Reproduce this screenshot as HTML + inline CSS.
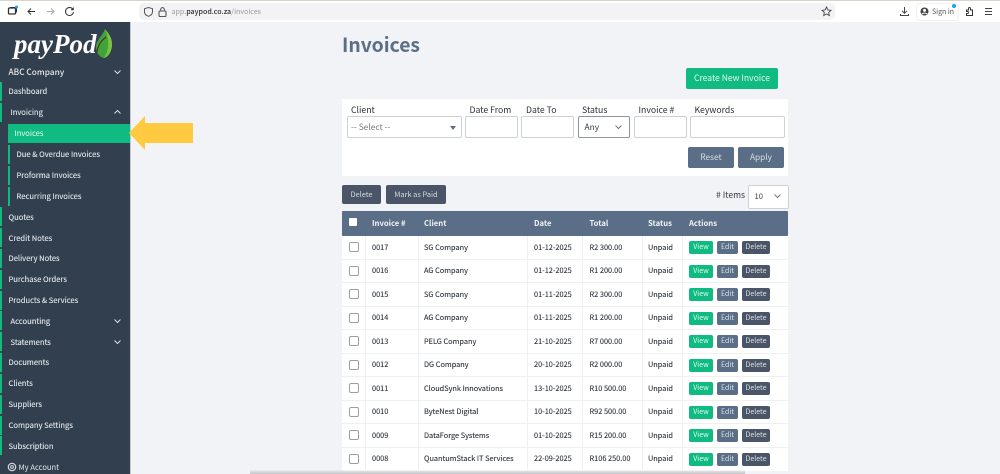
<!DOCTYPE html>
<html><head><meta charset="utf-8"><title>Invoices</title>
<style>
html,body{margin:0;padding:0;width:1000px;height:474px;overflow:hidden;background:#f2f3f6;font-family:"Noto Sans CJK JP","Liberation Sans",sans-serif;font-size:7.6px;color:#333b46}
div,span,svg{position:absolute;box-sizing:border-box}
.t{white-space:nowrap;line-height:12px}
.s{color:#e2e6ea;left:8.5px;-webkit-text-stroke:.12px #e2e6ea}
.g{left:0;width:2px;background:#10bb82}
.sg{left:8px;width:2px;background:#10bb82}
.l{color:#2b2f36;font-size:8.7px;top:104px}
.i{background:#fff;border:1px solid #ccd1d6;border-radius:2px;top:116px;height:22px}
.rw{left:342px;width:446px;height:23.5px;background:#fff;border-bottom:1px solid #eef0f2}
.c{width:10px;height:10px;left:7px;top:6px;border:1px solid #9a9fa5;border-radius:2px;background:#fff}
.rw .t{top:5.5px;color:#2f3640;font-size:7.35px;-webkit-text-stroke:.12px #2f3640}
.b{top:5px;height:13px;border-radius:2px;color:#dde2e7;font-size:7px;line-height:13px;text-align:center}
.v{left:347px;width:24px;background:#10bb82;color:#e2f8ef}
.e{left:375px;width:21px;background:#5a6f87}
.d{left:400px;width:28px;background:#4a5568}
.h{top:218px;color:#f2f4f6;font-weight:700;font-size:7.7px}
.vl{top:236px;width:1px;height:234px;background:#eef0f2}
</style></head><body>

<div style="left:0;top:0;width:1000px;height:22px;background:#fff"></div>
<div style="left:0;top:0;width:1000px;height:1px;background:#d8d4cc"></div>
<svg style="left:7px;top:4px" width="12" height="12" viewBox="0 0 12 12"><rect x="1.5" y="4" width="7" height="6" rx="1" fill="none" stroke="#333" stroke-width="1.3"/><path d="M3 3.5h6.5v5" fill="none" stroke="#333" stroke-width="1"/><circle cx="9.5" cy="3" r="1.5" fill="#1aa3ef"/></svg>
<svg style="left:26px;top:6px" width="11" height="11" viewBox="0 0 11 11"><path d="M9 5.5H2M5 2.5l-3 3 3 3" fill="none" stroke="#333" stroke-width="1"/></svg>
<svg style="left:45px;top:6px" width="11" height="11" viewBox="0 0 11 11"><path d="M2 5.5h7M6 2.5l3 3-3 3" fill="none" stroke="#aaa" stroke-width="1"/></svg>
<svg style="left:64px;top:6px" width="11" height="11" viewBox="0 0 11 11"><path d="M8.8 3.2A4 4 0 1 0 9.5 6M9.3 1.5v2.3H7" fill="none" stroke="#333" stroke-width="1"/></svg>
<div style="left:139px;top:3px;width:696px;height:17px;background:#f3f3f5;border-radius:5px"></div>
<svg style="left:143px;top:6px" width="11" height="12" viewBox="0 0 11 12"><path d="M5.5 1.5l4 1.2v3c0 2.4-1.8 3.8-4 4.6-2.2-.8-4-2.2-4-4.6v-3z" fill="none" stroke="#555" stroke-width="1"/></svg>
<svg style="left:157px;top:6px" width="11" height="12" viewBox="0 0 11 12"><rect x="2" y="5" width="7" height="5.5" rx="1" fill="none" stroke="#555" stroke-width="1.1"/><path d="M3.7 5V3.4a1.8 1.8 0 0 1 3.6 0V5" fill="none" stroke="#555" stroke-width="1"/></svg>
<div class="t" style="left:171.5px;top:5.5px;font-size:7.1px;color:#9a9a9f">app.<span style="position:static;color:#2b2b30;font-weight:500">paypod.co.za</span>/invoices</div>
<svg style="left:821px;top:6px" width="11" height="11" viewBox="0 0 11 11"><path d="M5.5 1l1.4 2.9 3.1.4-2.3 2.1.6 3.1-2.8-1.5-2.8 1.5.6-3.1L1 4.3l3.1-.4z" fill="none" stroke="#444" stroke-width=".9"/></svg>
<svg style="left:899px;top:6px" width="11" height="11" viewBox="0 0 11 11"><path d="M5.5 1v6M3 4.8l2.5 2.5L8 4.8M1.5 8v1.5h8V8" fill="none" stroke="#444" stroke-width="1"/></svg>
<div style="left:916px;top:3px;width:43px;height:18px;background:#fff;border:1px solid #f0f0f2;border-radius:4px"></div>
<svg style="left:920px;top:7px" width="9" height="9" viewBox="0 0 9 9"><circle cx="4.5" cy="4.5" r="4" fill="#444"/><circle cx="4.5" cy="3.4" r="1.5" fill="#fff"/><path d="M2 7.2c.6-1.4 4.4-1.4 5 0" stroke="#fff" fill="none"/></svg>
<div class="t" style="left:932px;top:6px;font-size:7px;color:#555">Sign in</div>
<div style="left:952px;top:4px;width:4px;height:4px;border-radius:50%;background:#1aa3ef"></div>
<svg style="left:964px;top:6px" width="11" height="11" viewBox="0 0 11 11"><path d="M2.5 4h2V2.5a1 1 0 0 1 2 0V4h2v5.5h-6V7.5h1a1 1 0 0 0 0-2h-1z" fill="none" stroke="#333" stroke-width="1"/></svg>
<svg style="left:983px;top:7px" width="11" height="9" viewBox="0 0 11 9"><path d="M2 1.5h7M2 4.5h7M2 7.5h7" stroke="#444" stroke-width="1"/></svg>

<div style="left:0;top:22px;width:130px;height:452px;background:#323f4e"></div>
<div style="left:130px;top:22px;width:1px;height:452px;background:#c4c9cf"></div>

<div class="t" style="left:14px;top:28px;font-family:'Liberation Serif',serif;font-style:italic;font-weight:700;font-size:27px;line-height:32px;color:#fff">payPod</div>
<svg style="left:94px;top:28px" width="20" height="33" viewBox="0 0 20 33"><path d="M11 1c4 5 7 9 7 15 0 8-4 13-8 14C5 29 2 24 2 19 2 12 8 9 11 1z" fill="#3fa23a"/><path d="M11 1c4 5 7 9 7 15 0 8-4 13-8 14 6-9 5-19 1-29z" fill="#7cc243"/><path d="M3 24C4 16 8 12 12 9" fill="none" stroke="#5a2d1a" stroke-width="1.1"/></svg>

<div class="t" style="left:8.5px;top:66px;color:#e6e9ec;font-size:8.3px;font-weight:500">ABC Company</div>
<svg style="left:113px;top:68px" width="9" height="8" viewBox="0 0 9 8"><path d="M1.5 2.5l3 3 3-3" fill="none" stroke="#d8dde3" stroke-width="1"/></svg>

<div class="g" style="top:82px;height:19px"></div><div class="t s" style="top:86px">Dashboard</div>
<div class="g" style="top:103px;height:19px"></div><div class="t s" style="top:107px;left:10.5px">Invoicing</div>
<svg style="left:113px;top:108px" width="9" height="8" viewBox="0 0 9 8"><path d="M1.5 5.5l3-3 3 3" fill="none" stroke="#d8dde3" stroke-width="1"/></svg>
<div style="left:8px;top:124px;width:122px;height:19px;background:#10bb82"></div><div class="t" style="left:14.5px;top:128px;color:#eefbf6">Invoices</div>
<div class="sg" style="top:145px;height:19px"></div><div class="t s" style="top:149px;left:16.5px">Due &amp; Overdue Invoices</div>
<div class="sg" style="top:166px;height:19px"></div><div class="t s" style="top:170px;left:16.5px">Proforma Invoices</div>
<div class="sg" style="top:187px;height:19px"></div><div class="t s" style="top:191px;left:16.5px">Recurring Invoices</div>
<div class="g" style="top:207px;height:19px"></div><div class="t s" style="top:212px">Quotes</div>
<div class="g" style="top:228px;height:19px"></div><div class="t s" style="top:233px">Credit Notes</div>
<div class="g" style="top:249px;height:19px"></div><div class="t s" style="top:253px">Delivery Notes</div>
<div class="g" style="top:270px;height:19px"></div><div class="t s" style="top:274px">Purchase Orders</div>
<div class="g" style="top:291px;height:19px"></div><div class="t s" style="top:295px">Products &amp; Services</div>
<div class="g" style="top:311px;height:19px"></div><div class="t s" style="top:316px;left:10.5px">Accounting</div>
<svg style="left:113px;top:317px" width="9" height="8" viewBox="0 0 9 8"><path d="M1.5 2.5l3 3 3-3" fill="none" stroke="#d8dde3" stroke-width="1"/></svg>
<div class="g" style="top:332px;height:19px"></div><div class="t s" style="top:337px;left:10.5px">Statements</div>
<svg style="left:113px;top:338px" width="9" height="8" viewBox="0 0 9 8"><path d="M1.5 2.5l3 3 3-3" fill="none" stroke="#d8dde3" stroke-width="1"/></svg>
<div class="g" style="top:353px;height:19px"></div><div class="t s" style="top:357px">Documents</div>
<div class="g" style="top:374px;height:19px"></div><div class="t s" style="top:378px">Clients</div>
<div class="g" style="top:395px;height:19px"></div><div class="t s" style="top:399px">Suppliers</div>
<div class="g" style="top:416px;height:19px"></div><div class="t s" style="top:420px">Company Settings</div>
<div class="g" style="top:436px;height:19px"></div><div class="t s" style="top:441px">Subscription</div>
<svg style="left:7px;top:462px" width="10" height="10" viewBox="0 0 10 10"><circle cx="5" cy="5" r="3.7" fill="none" stroke="#d8dde3" stroke-width="1.2"/><circle cx="5" cy="5" r="1.4" fill="none" stroke="#d8dde3"/></svg>
<div class="t" style="left:18.5px;top:461.5px;color:#e2e6ea">My Account</div>

<svg style="left:128px;top:114px" width="66" height="36" viewBox="0 0 66 36"><path d="M1 19L17 2v7h48v20H17v7z" fill="#ffc940"/></svg>

<div class="t" style="left:342px;top:32px;font-size:19.3px;line-height:24px;font-weight:700;color:#5a6f87">Invoices</div>
<div class="t" style="left:686px;top:68px;width:92px;height:21px;background:#10bb82;border-radius:2px;color:#e2f8ef;font-size:8.55px;line-height:21px;text-align:center">Create New Invoice</div>

<div style="left:342px;top:99px;width:446px;height:77px;background:#fff"></div>
<div class="t l" style="left:351px">Client</div>
<div class="t l" style="left:469.5px">Date From</div>
<div class="t l" style="left:526px">Date To</div>
<div class="t l" style="left:582px">Status</div>
<div class="t l" style="left:638.5px">Invoice #</div>
<div class="t l" style="left:694.5px">Keywords</div>
<div class="i" style="left:346.5px;width:115px"></div>
<div class="t" style="left:351px;top:121px;color:#777;font-size:8.4px">-- Select --</div>
<svg style="left:449px;top:125px" width="8" height="6" viewBox="0 0 8 6"><path d="M1 1h6L4 5z" fill="#5a6f87"/></svg>
<div class="i" style="left:465px;width:53px"></div>
<div class="i" style="left:521px;width:53px"></div>
<div class="i" style="left:578px;width:52px;border-color:#8f959c"></div>
<div class="t" style="left:584.5px;top:121px;font-size:8.4px;color:#333b46">Any</div>
<svg style="left:614px;top:123px" width="9" height="8" viewBox="0 0 9 8"><path d="M1.5 2.5l3 3 3-3" fill="none" stroke="#777" stroke-width="1"/></svg>
<div class="i" style="left:634px;width:53px"></div>
<div class="i" style="left:690px;width:95px"></div>
<div class="t" style="left:688px;top:146.5px;width:46px;height:21px;background:#5a6f87;border-radius:2px;color:#d8dee4;font-size:8.3px;line-height:21px;text-align:center">Reset</div>
<div class="t" style="left:738px;top:146.5px;width:46px;height:21px;background:#5a6f87;border-radius:2px;color:#d8dee4;font-size:8.3px;line-height:21px;text-align:center">Apply</div>

<div class="t" style="left:342px;top:185px;width:39px;height:19px;background:#4a5568;border-radius:2px;color:#d5dae0;font-size:7.4px;line-height:19px;text-align:center">Delete</div>
<div class="t" style="left:386px;top:185px;width:60px;height:19px;background:#4a5568;border-radius:2px;color:#d5dae0;font-size:7.4px;line-height:19px;text-align:center">Mark as Paid</div>
<div class="t" style="left:716px;top:189px;font-size:8.6px;color:#333b46"># Items</div>
<div class="i" style="left:748px;top:185px;width:41px;height:24px;background:#fff"></div>
<div class="t" style="left:754.5px;top:191px;color:#333b46">10</div>
<svg style="left:773px;top:192px" width="9" height="8" viewBox="0 0 9 8"><path d="M1.5 2.5l3 3 3-3" fill="none" stroke="#777" stroke-width="1"/></svg>

<div style="left:342px;top:211px;width:446px;height:25px;background:#5a6f87;border-radius:1px"></div>
<div style="left:349px;top:218px;width:8px;height:8px;background:#fff;border-radius:1px"></div>
<div class="t h" style="left:372px">Invoice #</div>
<div class="t h" style="left:424px">Client</div>
<div class="t h" style="left:534px">Date</div>
<div class="t h" style="left:589.5px">Total</div>
<div class="t h" style="left:648px">Status</div>
<div class="t h" style="left:689px">Actions</div>

<div class="rw" style="top:236px"><div class="c"></div><div class="t" style="left:30px">0017</div><div class="t" style="left:82px">SG Company</div><div class="t" style="left:192px">01-12-2025</div><div class="t" style="left:247.5px">R2 300.00</div><div class="t" style="left:306px">Unpaid</div><div class="b v">View</div><div class="b e">Edit</div><div class="b d">Delete</div></div>
<div class="rw" style="top:259.5px"><div class="c"></div><div class="t" style="left:30px">0016</div><div class="t" style="left:82px">AG Company</div><div class="t" style="left:192px">01-12-2025</div><div class="t" style="left:247.5px">R1 200.00</div><div class="t" style="left:306px">Unpaid</div><div class="b v">View</div><div class="b e">Edit</div><div class="b d">Delete</div></div>
<div class="rw" style="top:283px"><div class="c"></div><div class="t" style="left:30px">0015</div><div class="t" style="left:82px">SG Company</div><div class="t" style="left:192px">01-11-2025</div><div class="t" style="left:247.5px">R2 300.00</div><div class="t" style="left:306px">Unpaid</div><div class="b v">View</div><div class="b e">Edit</div><div class="b d">Delete</div></div>
<div class="rw" style="top:306.5px"><div class="c"></div><div class="t" style="left:30px">0014</div><div class="t" style="left:82px">AG Company</div><div class="t" style="left:192px">01-11-2025</div><div class="t" style="left:247.5px">R1 200.00</div><div class="t" style="left:306px">Unpaid</div><div class="b v">View</div><div class="b e">Edit</div><div class="b d">Delete</div></div>
<div class="rw" style="top:330px"><div class="c"></div><div class="t" style="left:30px">0013</div><div class="t" style="left:82px">PELG Company</div><div class="t" style="left:192px">21-10-2025</div><div class="t" style="left:247.5px">R7 000.00</div><div class="t" style="left:306px">Unpaid</div><div class="b v">View</div><div class="b e">Edit</div><div class="b d">Delete</div></div>
<div class="rw" style="top:353.5px"><div class="c"></div><div class="t" style="left:30px">0012</div><div class="t" style="left:82px">DG Company</div><div class="t" style="left:192px">20-10-2025</div><div class="t" style="left:247.5px">R2 000.00</div><div class="t" style="left:306px">Unpaid</div><div class="b v">View</div><div class="b e">Edit</div><div class="b d">Delete</div></div>
<div class="rw" style="top:377px"><div class="c"></div><div class="t" style="left:30px">0011</div><div class="t" style="left:82px">CloudSynk Innovations</div><div class="t" style="left:192px">13-10-2025</div><div class="t" style="left:247.5px">R10 500.00</div><div class="t" style="left:306px">Unpaid</div><div class="b v">View</div><div class="b e">Edit</div><div class="b d">Delete</div></div>
<div class="rw" style="top:400.5px"><div class="c"></div><div class="t" style="left:30px">0010</div><div class="t" style="left:82px">ByteNest Digital</div><div class="t" style="left:192px">10-10-2025</div><div class="t" style="left:247.5px">R92 500.00</div><div class="t" style="left:306px">Unpaid</div><div class="b v">View</div><div class="b e">Edit</div><div class="b d">Delete</div></div>
<div class="rw" style="top:424px"><div class="c"></div><div class="t" style="left:30px">0009</div><div class="t" style="left:82px">DataForge Systems</div><div class="t" style="left:192px">01-10-2025</div><div class="t" style="left:247.5px">R15 200.00</div><div class="t" style="left:306px">Unpaid</div><div class="b v">View</div><div class="b e">Edit</div><div class="b d">Delete</div></div>
<div class="rw" style="top:447.5px;height:23px;border-bottom:0"><div class="c"></div><div class="t" style="left:30px">0008</div><div class="t" style="left:82px">QuantumStack IT Services</div><div class="t" style="left:192px">22-09-2025</div><div class="t" style="left:247.5px">R106 250.00</div><div class="t" style="left:306px">Unpaid</div><div class="b v">View</div><div class="b e">Edit</div><div class="b d">Delete</div></div>

<div class="vl" style="left:365px"></div><div class="vl" style="left:418px"></div><div class="vl" style="left:527px"></div><div class="vl" style="left:582px"></div><div class="vl" style="left:642px"></div><div class="vl" style="left:682px"></div>

<div style="left:250px;top:470px;width:495px;height:4px;background:linear-gradient(to bottom,rgba(150,150,150,.08),rgba(110,110,110,.35))"></div>
</body></html>
